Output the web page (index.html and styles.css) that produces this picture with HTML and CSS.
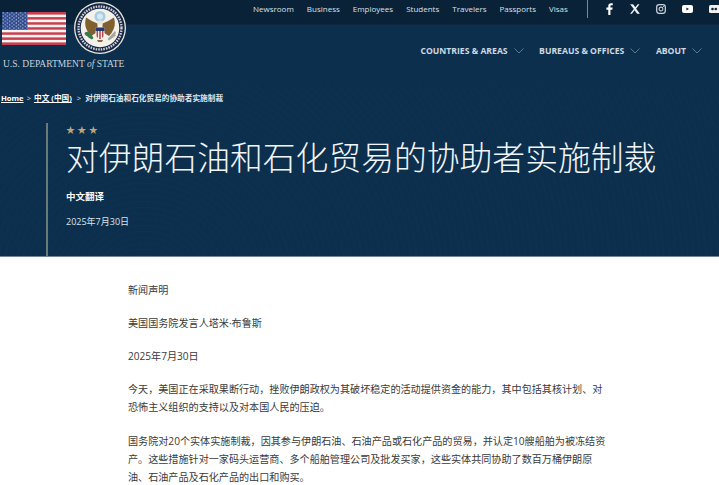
FILE: index.html
```html
<!DOCTYPE html>
<html lang="zh-CN">
<head>
  <meta charset="UTF-8">
  <meta name="viewport" content="width=device-width, initial-scale=1.0">
  <title>对伊朗石油和石化贸易的协助者实施制裁</title>
  <link rel="stylesheet" href="styles.css">
</head>
<body>
  <header class="site-header">
    <a class="logo" href="#">
      <div class="logo-marks">
        <svg class="flag" viewBox="0 0 64 33" width="64" height="33">
          <defs>
            <pattern id="stars" width="4.4" height="3.4" patternUnits="userSpaceOnUse">
              <circle cx="1.1" cy=".9" r=".62" fill="#dfe5f0"/>
              <circle cx="3.300" cy="2.600" r=".62" fill="#dfe5f0"/>
            </pattern>
          </defs>
          <rect width="64" height="33" fill="#f6f3f3"/>
          <g fill="#c8404f">
            <rect y="0" width="64" height="2.6"/>
            <rect y="5.1" width="64" height="2.5"/>
            <rect y="10.2" width="64" height="2.5"/>
            <rect y="15.2" width="64" height="2.5"/>
            <rect y="20.3" width="64" height="2.5"/>
            <rect y="25.4" width="64" height="2.5"/>
            <rect y="30.4" width="64" height="2.6"/>
          </g>
          <rect width="25.500" height="17.7" fill="#2f4a8c"/>
          <rect width="25.500" height="17.7" fill="url(#stars)"/>
        </svg>
        <svg class="seal" viewBox="0 0 52 52" width="52" height="52">
          <circle cx="26" cy="26" r="26" fill="#ece8da"/>
          <circle cx="26" cy="26" r="24.700" fill="#16264a"/>
          <circle cx="26" cy="26" r="21.500" fill="none" stroke="#cfd2cf" stroke-width="2.400" stroke-dasharray="1.600 1"/>
          <circle cx="26" cy="26" r="19.300" fill="#f3f1e9"/>
          <circle cx="26" cy="14.500" r="5.500" fill="#a6cde6"/>
          <circle cx="26" cy="14.500" r="3" fill="#d6e8f3"/>
          <path d="M23.500 21.500 Q17 19 12 15.500 Q9.500 24 14.500 31 L17 34 L23.500 30 Z" fill="#80602f"/>
          <path d="M28.500 21.500 Q35 19 40 15.500 Q42.500 24 37.500 31 L35 34 L28.500 30 Z" fill="#80602f"/>
          <path d="M23.500 18.500 h5 v4 h-5 Z" fill="#e9e4d4"/>
          <path d="M21.500 25.500 h9 v8 q-1.500 3 -4.500 4 q-3 -1 -4.500 -4 Z" fill="#f4f1ea"/>
          <path d="M22.600 29 h1.300 v7 l-1.300 -1.600 Z M25.300 29 h1.400 v8 h-1.400 Z M28.100 29 h1.300 v5.400 l-1.300 1.600 Z" fill="#b8303f"/>
          <rect x="21.500" y="25.500" width="9" height="3.500" fill="#26386f"/>
          <path d="M10.500 31 q2 -2 4 -1 q3 2 5 6 l-1.500 1.500 q-3.500 -1.500 -5 -3.500 q-2 0 -2.500 -3 Z" fill="#3c7a48"/>
          <path d="M41 29 l-7.500 8 1.500 1.500 7 -5 -1 -1 1 -1.500 Z" fill="#a7a79f"/>
          <path d="M23 38 h6 l-1 2 h-4 Z" fill="#8c6a38"/>
        </svg>
      </div>
      <div class="logo-text">U.S. DEPARTMENT <em>of</em> STATE</div>
    </a>
    <div class="header-nav">
      <div class="top-bar">
        <nav class="utility-nav">
          <a href="#">Newsroom</a>
          <a href="#">Business</a>
          <a href="#">Employees</a>
          <a href="#">Students</a>
          <a href="#">Travelers</a>
          <a href="#">Passports</a>
          <a href="#">Visas</a>
        </nav>
        <div class="social">
          <svg viewBox="0 0 9 14" width="8" height="12"><path d="M2.500 14V7.800H.3V5.300h2.200V3.600C2.500 1.400 3.800.3 5.700.3c.9 0 1.700.1 2 .1v2.300H6.300c-1 0-1.300.5-1.300 1.200v1.400h2.600l-.4 2.500H5V14Z" fill="#fff"/></svg>
          <svg viewBox="0 0 12 12" width="10" height="10"><path d="M.2.3 4.600 6 .1 11.700H2.300l3.200-4.200 3 4.200h3.400L7.300 5.600 11.400.3H9.300L6.400 4 3.700.3Z" fill="#eef2f5"/></svg>
          <svg viewBox="0 0 12 12" width="10" height="10"><rect x=".8" y=".8" width="10.400" height="10.400" rx="3" fill="none" stroke="#c9d2da" stroke-width="1.500"/><circle cx="6" cy="6" r="2.300" fill="none" stroke="#c9d2da" stroke-width="1.300"/><circle cx="9" cy="3" r=".7" fill="#c9d2da"/></svg>
          <svg viewBox="0 0 11 8" width="11" height="8"><rect width="11" height="8" rx="2" fill="#fff"/><path d="M4.400 2.500v3L7 4Z" fill="#0b2540"/></svg>
          <svg viewBox="0 0 12 8" width="12" height="8"><rect width="12" height="8" rx="1.500" fill="#f4f1ea"/><circle cx="3.500" cy="4" r="1.300" fill="#0b2540"/><circle cx="6.800" cy="4" r="1.300" fill="#0b2540"/></svg>
        </div>
      </div>
      <nav class="main-nav">
        <a href="#">COUNTRIES &amp; AREAS<svg class="chev" viewBox="0 0 10 6" width="10" height="6"><path d="M.5.5 5 5 9.500.5" fill="none" stroke="#6f8aa1" stroke-width=".8"/></svg></a>
        <a href="#">BUREAUS &amp; OFFICES<svg class="chev" viewBox="0 0 10 6" width="10" height="6"><path d="M.5.5 5 5 9.500.5" fill="none" stroke="#6f8aa1" stroke-width=".8"/></svg></a>
        <a href="#">ABOUT<svg class="chev" viewBox="0 0 10 6" width="10" height="6"><path d="M.5.5 5 5 9.500.5" fill="none" stroke="#6f8aa1" stroke-width=".8"/></svg></a>
      </nav>
    </div>
  </header>

  <section class="hero">
    <div class="breadcrumbs">
      <a href="#">Home</a><span class="sep">&gt;</span><a href="#">中文 (中国)</a><span class="sep sep-wide">&gt;</span><span>对伊朗石油和石化贸易的协助者实施制裁</span>
    </div>
    <div class="hero-block">
      <div class="stars">★ ★ ★</div>
      <h1>对伊朗石油和石化贸易的协助者实施制裁</h1>
      <p class="hero-tag">中文翻译</p>
      <p class="hero-date">2025年7月30日</p>
    </div>
  </section>

  <main class="article">
    <p>新闻声明</p>
    <p>美国国务院发言人塔米·布鲁斯</p>
    <p>2025年7月30日</p>
    <p>今天，美国正在采取果断行动，挫败伊朗政权为其破坏稳定的活动提供资金的能力，其中包括其核计划、对恐怖主义组织的支持以及对本国人民的压迫。</p>
    <p>国务院对20个实体实施制裁，因其参与伊朗石油、石油产品或石化产品的贸易，并认定10艘船舶为被冻结资产。这些措施针对一家码头运营商、多个船舶管理公司及批发买家，这些实体共同协助了数百万桶伊朗原油、石油产品及石化产品的出口和购买。</p>
  </main>
</body>
</html>
```
FILE: styles.css
```css
html, body {
  margin: 0;
  overflow: hidden;
}
body {
  font-family: "Open Sans", "Noto Sans CJK SC", sans-serif;
  background-color: #fff;
  color: #333;
}
a {
  color: inherit;
  text-decoration: none;
}

/* header */
.site-header {
  display: flex;
  height: 85px;
  background: linear-gradient(#0a2238 0, #0a2238 24px, #0c2f4e 25px);
  color: #fff;
}
.logo {
  display: block;
  width: 240px;
  flex: none;
  padding: 2px 0 0 2px;
  box-sizing: border-box;
}
.logo-marks {
  display: flex;
  align-items: center;
  gap: 8px;
}
.flag {
  flex: none;
}
.seal {
  flex: none;
}
.logo-text {
  margin: 3px 0 0 1px;
  font-family: "Liberation Serif", serif;
  font-size: 9.500px;
  line-height: 14px;
  color: #c9d3dc;
  white-space: nowrap;
}
.header-nav {
  flex: 1;
  min-width: 0;
}
.top-bar {
  display: flex;
  align-items: center;
  height: 18px;
}
.utility-nav {
  display: flex;
  gap: 13px;
  padding: 0 0 2px 13px;
  font-size: 8px;
  color: #d8e0e7;
  white-space: nowrap;
}
.social {
  display: flex;
  align-items: center;
  gap: 16px;
  margin-left: 19px;
  padding: 0 0 1px 18px;
  height: 18px;
  box-sizing: border-box;
  border-left: 1px solid #77899a;
}
.social svg {
  flex: none;
}
.main-nav {
  display: flex;
  justify-content: flex-end;
  gap: 15.500px;
  margin-top: 26px;
  padding-right: 17px;
  font-size: 8.650px;
  font-weight: 700;
  color: #cfd9e2;
  line-height: 14px;
  white-space: nowrap;
}
.main-nav a {
  display: flex;
  align-items: center;
  gap: 6px;
}

/* hero */
.hero {
  height: 172px;
  background-color: #0c2f4e;
  background-image:
    repeating-radial-gradient(circle at 20% 120%, rgba(255, 255, 255, 0) 0, rgba(255, 255, 255, 0) 4px, rgba(255, 255, 255, 0.012) 5px, rgba(255, 255, 255, 0) 6px),
    repeating-radial-gradient(circle at 80% 130%, rgba(0, 0, 0, 0) 0, rgba(0, 0, 0, 0) 4px, rgba(0, 0, 0, 0.025) 5px, rgba(0, 0, 0, 0) 6px);
  color: #fff;
  border-bottom: 1px solid #6f8597;
  box-sizing: border-box;
}
.breadcrumbs {
  display: flex;
  align-items: center;
  padding-left: 1px;
  height: 25px;
  font-size: 7.670px;
  font-weight: 600;
  color: #dfe6ec;
  white-space: nowrap;
}
.breadcrumbs a {
  color: #fff;
  font-weight: 700;
  text-decoration: underline;
}
.sep {
  margin: 0 3px;
  font-weight: 400;
}
.sep-wide {
  margin: 0 4px 0 5px;
}
.hero-block {
  margin: 13px 0 0 46px;
  padding-left: 18px;
  height: 133px;
  border-left: 2px solid #6a7a78;
}
.stars {
  font-size: 9px;
  line-height: 13px;
  color: #bfa37c;
}
h1 {
  margin: 0;
  font-size: 32.800px;
  font-weight: 300;
  line-height: 44px;
  white-space: nowrap;
  color: #f2f5f7;
}
.hero-tag {
  margin: 10px 0 0;
  font-size: 9.500px;
  font-weight: 700;
  line-height: 14px;
}
.hero-date {
  margin: 11px 0 0;
  font-size: 9px;
  line-height: 14px;
  color: #dce3e9;
}

/* body copy */
.article {
  width: 479px;
  padding: 23.500px 0 0 128px;
  font-size: 10.100px;
  line-height: 18px;
  color: #3a3a3a;
}
.article p {
  margin: 0 0 15.300px;
}
```
